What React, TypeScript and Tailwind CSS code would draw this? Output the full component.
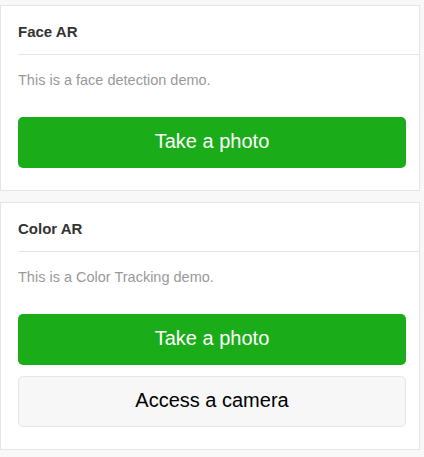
const DEMOS = [
  { title: "Face AR", desc: "This is a face detection demo.", camera: false },
  { title: "Color AR", desc: "This is a Color Tracking demo.", camera: true },
];

function DemoCard({ title, desc, camera }: { title: string; desc: string; camera: boolean }) {
  return (
    <section className="border border-[#e5e5e5] bg-white">
      <div className="ml-[17px] flex h-[49px] items-center border-b border-[#e5e5e5] pt-[4px] text-[15px] font-bold text-[#333]">
        {title}
      </div>
      <div className="pl-[17px] pb-[22px]">
        <p className="pt-[15px] text-[14.5px] leading-[20px] text-[#999]">{desc}</p>
        <div className="mt-[27px] flex w-[388px] flex-col gap-[11px]">
          <button
            type="button"
            className="flex h-[51px] w-full items-center justify-center rounded-[5px] bg-[#1aad19] pb-[3px] text-[20px] text-white"
          >
            Take a photo
          </button>
          {camera && (
            <button
              type="button"
              className="flex h-[51px] w-full items-center justify-center rounded-[5px] border border-[#e6e6e6] bg-[#f7f7f7] pb-[3px] text-[20px] text-black"
            >
              Access a camera
            </button>
          )}
        </div>
      </div>
    </section>
  );
}

export default function App() {
  return (
    <div className="min-h-screen bg-[#f8f8f8] pt-[5px] font-['Liberation_Sans',Arial,sans-serif]">
      <div className="flex w-[420px] flex-col gap-[11px]">
        {DEMOS.map((d) => (
          <DemoCard key={d.title} {...d} />
        ))}
      </div>
    </div>
  );
}
